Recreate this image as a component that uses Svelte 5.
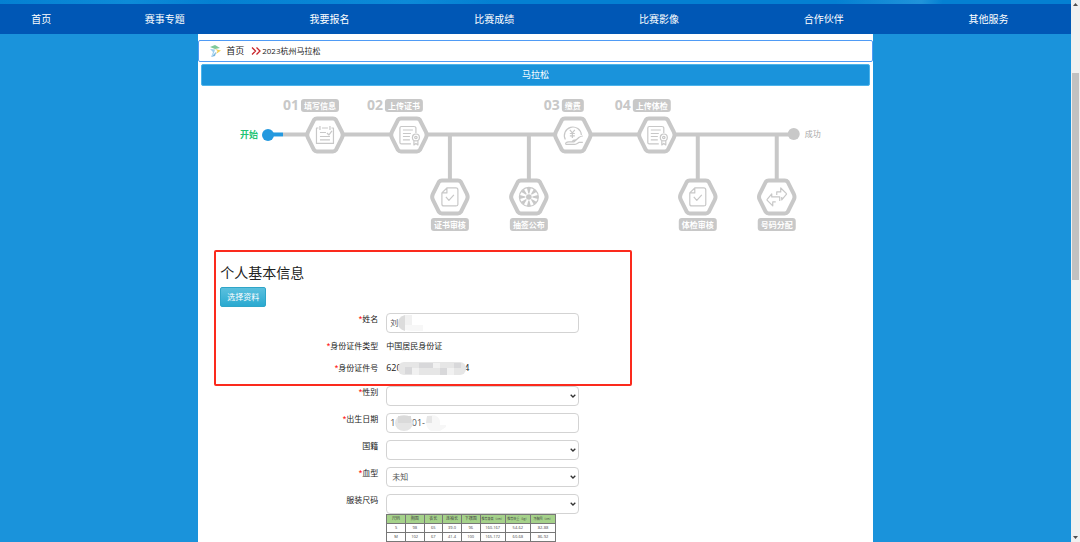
<script lang="ts">
  const navItems = ["首页", "赛事专题", "我要报名", "比赛成绩", "比赛影像", "合作伙伴", "其他服务"];

  // main steps sit on the line, sub steps hang below it
  const steps = [
    { x: 127, tagX: 103, no: "01", label: "填写信息", icon: "calendar" },
    { x: 211, tagX: 187, no: "02", label: "上传证书", icon: "cert" },
    { x: 375, tagX: 364, no: "03", label: "缴费", icon: "pay" },
    { x: 459, tagX: 435, no: "04", label: "上传体检", icon: "cert" },
  ];
  const subSteps = [
    { x: 252, label: "证书审核", icon: "check" },
    { x: 331, label: "抽签公布", icon: "wheel" },
    { x: 500, label: "体检审核", icon: "check" },
    { x: 579, label: "号码分配", icon: "swap" },
  ];
  const spokes = [0, 45, 90, 135, 180, 225, 270, 315];

  const sizeHead = ["尺码", "胸围", "衣长", "连袖长", "下摆围", "推荐身高（cm）", "推荐体重（kg）", "净胸围（cm）"];
  const sizeRows = [
    ["S", "98", "65", "39.0", "96", "160-167", "54-62", "82-88"],
    ["M", "102", "67", "41.4", "100", "165-172", "60-68", "86-92"],
  ];

  let name = $state("刘");
  let gender = $state("");
  let birthday = $state("1\u2002\u2002\u2002\u200401-");
  let country = $state("");
  let blood = $state("未知");
  let size = $state("");
</script>

{#snippet hexagon(x: number, y: number, icon: string)}
  <g transform="translate({x} {y})">
    <path class="hex" d="M-8 -16.500H8Q10 -16.500 11 -15L17 -3Q18.500 0 17 3L11 15Q10 16.500 8 16.500H-8Q-10 16.500 -11 15L-17 3Q-18.500 0 -17 -3L-11 -15Q-10 -16.500 -8 -16.500Z" />
    <g class="glyph">
      {#if icon === "calendar"}
        <path d="M-6.500 -7H-8.500V8.500H8.500V-7H6.500M-3 -7H3M-5 -9V-5M5 -9V-5M-5 -2.500H1M2 -2L4 0L7 -4M-5 1.500H5M-5 5H5" />
      {:else if icon === "cert"}
        <path d="M2 9H-7.500Q-9 9 -9 7.500V-7Q-9 -8.500 -7.500 -8.500H5Q7 -8.500 7 -7V-2M-6 -5H4M-6 -1.500H2M-6 1.500H1M-6 5H1" />
        <circle cx="7" cy="2.500" r="3.500" />
        <circle cx="7" cy="2.500" r="1.200" />
        <path d="M5 6V10L7 8.500L9 10V6" />
      {:else if icon === "pay"}
        <path d="M-7.500 4.500A8.500 8.500 0 1 1 8.500 0M-3 -5L-.5 -2L2 -5M-.5 -2V3M-3 -1.500H2M-3 .8H2" />
        <path d="M-7 9.500Q-8 7 -4 7H1L6 2.500Q8 1 10 1M-7 9.500H2Q4 9 6 7.500H10M-1 7Q0 5 3 5" />
      {:else if icon === "check"}
        <path d="M-3 -9H6Q8 -9 8 -7V7.500Q8 9 6 9H-6Q-8 9 -8 7V-4ZM-3 -9V-4H-8M-4 0L-1 3.500L4 -2" />
      {:else if icon === "wheel"}
        <circle r="9.500" />
        {#each spokes as angle}
          <path class="wedge" transform="rotate({angle})" d="M-.5 -3.500L-2 -9.200H2L.5 -3.500Z" />
        {/each}
        <circle class="wedge" r="2.800" />
      {:else}
        <path d="M-10 3L-5 -3V0H3V4M-10 3L-4 9V5H-1M10 -3L4 -9V-5H0V-2M10 -3L5 3V0" />
      {/if}
    </g>
  </g>
{/snippet}

{#snippet chevron()}
  <svg class="chevron" viewBox="0 0 6 4" aria-hidden="true"><path d="M.7 .7L3 3L5.300 .7" /></svg>
{/snippet}

<div class="page">
  <div class="content">
    <div class="banner"></div>
    <nav class="nav">
      {#each navItems as item}
        <a href="#top">{item}</a>
      {/each}
    </nav>

    <main class="panel">
      <div class="breadcrumb">
        <svg class="logo" viewBox="0 0 12 12" aria-hidden="true">
          <path d="M1 2L6 0L11 3L6 4Z" fill="#7fc99a" />
          <path d="M6 4L12 5.500L7 9L8.500 6Z" fill="#f1cf58" />
          <path d="M1 4L6 4.500L5 8L2 12L4 7Z" fill="#9fd0ee" />
          <path d="M7.500 6.500L6 11L2 12L6 8Z" fill="#79b7df" />
        </svg>
        <a href="#home">首页</a>
        <svg class="arrows" viewBox="0 0 10 8" aria-hidden="true">
          <path d="M1 .5L4.500 4L1 7.500M5.500 .5L9 4L5.500 7.500" />
        </svg>
        <span>2023杭州马拉松</span>
      </div>
      <div class="title">马拉松</div>

      <svg class="flow" viewBox="0 0 675 164" role="img" aria-label="报名流程">
        <path class="line" d="M85 48.500H596M252 48V96M331 48V96M500 48V96M579 48V96" />
        <path class="line done" d="M70 48.500H85" />
        <circle cx="70" cy="49" r="6" fill="#2499df" />
        <circle cx="596" cy="48" r="6" fill="#c8c8c8" />
        <text class="start" x="42" y="52">开始</text>
        <text class="end" x="607" y="51">成功</text>
        {#each steps as s}
          {@const w = s.label.length * 8 + 6}
          <text class="no" x={s.tagX - 18} y="24">{s.no}</text>
          <rect class="tag" x={s.tagX} y="13" width={w} height="13" rx="3" />
          <text class="tag-text" x={s.tagX + w / 2} y="23">{s.label}</text>
          {@render hexagon(s.x, 49, s.icon)}
        {/each}
        {#each subSteps as s}
          {@render hexagon(s.x, 111, s.icon)}
          <rect class="tag" x={s.x - 19} y="132" width="38" height="13" rx="3" />
          <text class="tag-text" x={s.x} y="142">{s.label}</text>
        {/each}
      </svg>

      <form class="form">
        <section class="basic">
          <h2>个人基本信息</h2>
          <button type="button" class="choose">选择资料</button>
          <div class="row">
            <label for="name"><i>*</i>姓名</label>
            <div class="field">
              <input id="name" type="text" bind:value={name} />
              <svg class="mask" viewBox="0 0 193 20" aria-hidden="true">
                <path d="M19 2Q12 4 12 10T19 18Z" fill="#dcdcdc" />
                <path d="M19 2H26V17H19Z" fill="#f1f1f1" />
                <path d="M19 12H37V18H26L19 17Z" fill="#f7f7f7" />
              </svg>
            </div>
          </div>
          <div class="row static">
            <span class="label"><i>*</i>身份证件类型</span>
            <div class="field">中国居民身份证</div>
          </div>
          <div class="row static">
            <span class="label"><i>*</i>身份证件号</span>
            <div class="field id-number">
              <span class="id-head">620</span><span>4</span>
              <svg class="mask id-mask" viewBox="0 0 68 13" aria-hidden="true">
                <rect width="68" height="13" rx="6" fill="#e6e6e6" />
                <path d="M7 5H14V12H7ZM21 1H35V6H21ZM42 6H49V13H42ZM56 1H63V6H56Z" fill="#d8d8da" />
                <path d="M14 6H21V13H14ZM35 1H42V6H35ZM49 6H56V13H49Z" fill="#f1f1f1" />
              </svg>
            </div>
          </div>
        </section>

        <div class="more">
          <div class="row">
            <label for="gender"><i>*</i>性别</label>
            <div class="field">
              <select id="gender" bind:value={gender}>
                <option value=""></option>
                <option>男</option>
                <option>女</option>
              </select>
              {@render chevron()}
            </div>
          </div>
          <div class="row">
            <label for="birthday"><i>*</i>出生日期</label>
            <div class="field">
              <input id="birthday" type="text" bind:value={birthday} />
              <svg class="mask" viewBox="0 0 193 20" aria-hidden="true">
                <ellipse cx="18" cy="10" rx="9" ry="8" fill="#e5e5e5" />
                <path d="M12 3H25V10H12Z" fill="#dadada" />
                <path d="M41 3Q52 0 54 8V12H60V14L54 18H45Q41 16 40 10Z" fill="#f7f7f7" />
                <path d="M41 3H46V10H40Z" fill="#e6e6e6" />
              </svg>
            </div>
          </div>
          <div class="row">
            <label for="country">国籍</label>
            <div class="field">
              <select id="country" bind:value={country}>
                <option value=""></option>
                <option>中国</option>
              </select>
              {@render chevron()}
            </div>
          </div>
          <div class="row">
            <label for="blood"><i>*</i>血型</label>
            <div class="field">
              <select id="blood" bind:value={blood}>
                <option>未知</option>
                <option>A</option>
                <option>B</option>
                <option>O</option>
              </select>
              {@render chevron()}
            </div>
          </div>
          <div class="row">
            <label for="size">服装尺码</label>
            <div>
              <div class="field">
                <select id="size" bind:value={size}>
                  <option value=""></option>
                  <option>S</option>
                  <option>M</option>
                </select>
                {@render chevron()}
              </div>
              <table class="sizes">
                <thead>
                  <tr>{#each sizeHead as h}<th>{h}</th>{/each}</tr>
                </thead>
                <tbody>
                  {#each sizeRows as row}
                    <tr>{#each row as cell}<td>{cell}</td>{/each}</tr>
                  {/each}
                </tbody>
              </table>
            </div>
          </div>
        </div>
      </form>
    </main>
  </div>

  <div class="scrollbar" aria-hidden="true">
    <svg viewBox="0 0 9 9"><path d="M2 6H7L4.500 3Z" /></svg>
    <div class="track"><div class="thumb"></div></div>
    <svg viewBox="0 0 9 9"><path d="M2 3H7L4.500 6Z" /></svg>
  </div>
</div>

<style>
  :global(body) {
    background: #1a93db;
  }
  .page {
    display: flex;
    height: 100vh;
    overflow: hidden;
    font-family: "Open Sans", "Noto Sans CJK SC", sans-serif;
    font-size: 8px;
    line-height: 12px;
    color: #222;
  }
  .content {
    flex: 1;
    min-width: 0;
    display: flex;
    flex-direction: column;
  }
  .banner {
    flex: none;
    height: 4px;
    background: linear-gradient(100deg, #0480d2 0%, #0d8bd8 12%, #0480d2 20%, #0c8ad8 38%, #0480d2 46%, #0480d2 78%, #2093da 86%, #0480d2 88%);
  }
  .nav {
    flex: none;
    display: flex;
    height: 30px;
    background: #0057b5;
  }
  .nav a {
    flex: 2;
    color: #fff;
    font-size: 10px;
    line-height: 30px;
    text-align: center;
    text-decoration: none;
  }
  .nav a:first-child {
    flex: 1;
  }
  .panel {
    flex: 1;
    width: 63%;
    margin: 0 auto;
    padding-top: 6px;
    box-sizing: border-box;
    background: #fff;
  }
  .breadcrumb {
    display: flex;
    align-items: center;
    height: 22px;
    padding-left: 10px;
    box-sizing: border-box;
    border: 1px solid #4f9bf5;
    border-radius: 2px;
  }
  .breadcrumb a {
    margin: 0 7px 0 5px;
    color: #222;
    font-size: 9px;
    text-decoration: none;
  }
  .logo {
    width: 12px;
    height: 12px;
  }
  .arrows {
    width: 10px;
    height: 8px;
    margin-right: 1px;
    fill: none;
    stroke: #c9252b;
    stroke-width: 1.3;
  }
  .title {
    height: 22px;
    margin: 2px 3px 0;
    box-sizing: border-box;
    border: 1px solid #4db3ea;
    border-radius: 2px;
    background: #1a93db;
    color: #fff;
    font-size: 9px;
    line-height: 20px;
    text-align: center;
  }
  .flow {
    display: block;
    width: 100%;
  }
  .line {
    fill: none;
    stroke: #c8c8c8;
    stroke-width: 4;
  }
  .line.done {
    stroke: #2499df;
  }
  .hex {
    fill: #fff;
    stroke: #c8c8c8;
    stroke-width: 4;
  }
  .glyph {
    fill: none;
    stroke: #c8c8c8;
    stroke-width: 1.2;
    stroke-linejoin: round;
  }
  .wedge {
    fill: #c8c8c8;
    stroke: none;
  }
  .start {
    fill: #22c373;
    font-size: 9px;
    font-weight: 700;
  }
  .end {
    fill: #a8a8a8;
    font-size: 8px;
  }
  .no {
    fill: #c8c8c8;
    font-size: 14px;
    font-weight: 700;
  }
  .tag {
    fill: #c8c8c8;
  }
  .tag-text {
    fill: #fff;
    font-size: 8px;
    font-weight: 700;
    text-anchor: middle;
  }
  .basic {
    width: 62%;
    margin-left: 16px;
    padding: 11px 4px 0;
    box-sizing: border-box;
    border: 2px solid #fb2a1d;
    border-radius: 2px;
  }
  .basic h2 {
    margin: 0 0 4px;
    font-size: 14px;
    font-weight: 400;
    line-height: 20px;
  }
  .choose {
    display: block;
    height: 20px;
    margin-bottom: 6px;
    padding: 0 6px;
    border: 1px solid #2fa5c8;
    border-radius: 2px;
    background: linear-gradient(#5bc0de, #2aa9d0);
    color: #fff;
    font: inherit;
    cursor: pointer;
  }
  .more {
    padding-left: 22px;
  }
  .row {
    display: grid;
    grid-template-columns: 158px 193px;
    column-gap: 8px;
    margin-bottom: 7px;
  }
  .row.static {
    margin-bottom: 10px;
  }
  .row label,
  .row .label {
    text-align: right;
  }
  .row i {
    color: #f00;
    font-family: "Liberation Sans", sans-serif;
    font-size: 9px;
    font-style: normal;
  }
  .field {
    position: relative;
  }
  .field input,
  .field select {
    display: block;
    width: 100%;
    height: 20px;
    padding: 0 3px;
    box-sizing: border-box;
    border: 1px solid #d3d3d3;
    border-radius: 4px;
    background: #fff;
    color: #555;
    font: inherit;
    appearance: none;
  }
  .field select {
    padding-left: 5px;
  }
  .field input:focus,
  .field select:focus {
    border-color: #4f9bf5;
    outline: none;
  }
  .chevron {
    position: absolute;
    top: 8px;
    right: 3px;
    width: 6px;
    height: 4px;
    fill: none;
    stroke: #333;
    stroke-width: 1.3;
    pointer-events: none;
  }
  .mask {
    position: absolute;
    inset: 0;
    width: 100%;
    pointer-events: none;
  }
  .id-number,
  .field #birthday {
    font-size: 9px;
  }
  .id-head {
    display: inline-block;
    width: 78px;
  }
  .mask.id-mask {
    left: 12px;
    width: 68px;
  }
  .sizes {
    width: 170px;
    border-collapse: collapse;
    table-layout: fixed;
    color: #444;
    font-size: 4px;
    line-height: 8px;
    text-align: center;
  }
  .sizes th,
  .sizes td {
    padding: 0;
    border: 1px solid #777;
    font-weight: 400;
    white-space: nowrap;
  }
  .sizes th {
    width: 11%;
    background: #a5d28a;
  }
  .sizes th:nth-child(n + 6) {
    width: 15%;
    font-size: 3px;
  }
  .scrollbar {
    flex: none;
    display: flex;
    flex-direction: column;
    width: 9px;
    background: #f0f0f0;
  }
  .scrollbar svg {
    height: 9px;
    fill: #505050;
  }
  .track {
    flex: 1;
    padding: 64px 1px 0;
  }
  .thumb {
    height: 45%;
    background: #c1c1c1;
  }
</style>
